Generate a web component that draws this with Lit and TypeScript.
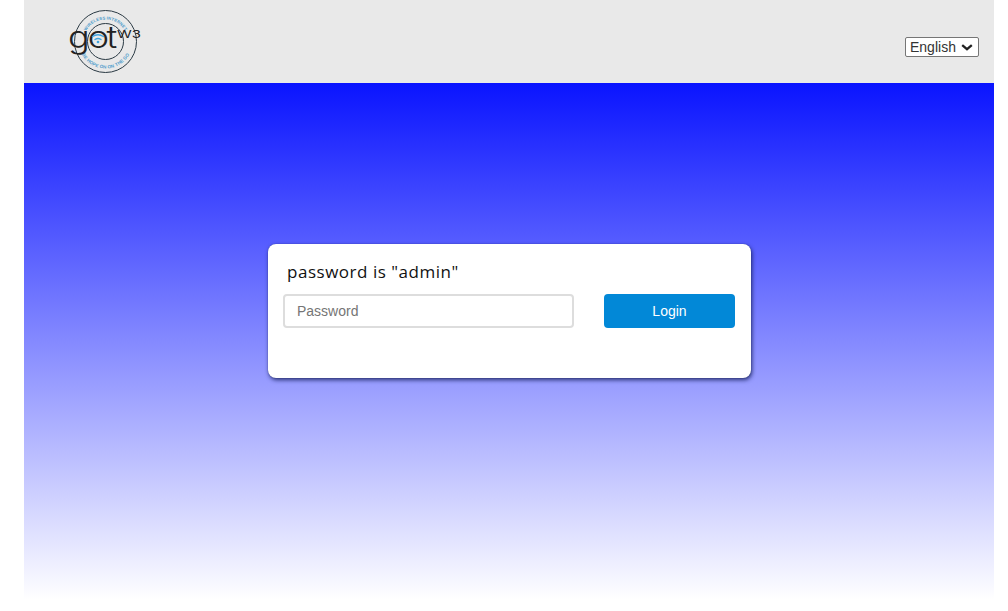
import { LitElement, html, css } from "lit";
import { customElement } from "lit/decorators.js";

@customElement("app-root")
export class AppRoot extends LitElement {
  static styles = css`
    :host {
      display: block;
      height: 611px;
      box-sizing: border-box;
      padding: 0 14px 0 24px;
      background: #fff;
      font-family: "Liberation Sans", Arial, sans-serif;
      overflow: hidden;
    }
    .header {
      height: 83px;
      background: #e9e9e9;
      display: flex;
      justify-content: space-between;
      align-items: flex-start;
      padding: 0 15px 0 40px;
    }
    .logo {
      display: block;
      margin-top: 6px;
      width: 80px;
      height: 70px;
    }
    .lang {
      appearance: none;
      -webkit-appearance: none;
      margin-top: 37px;
      width: 74px;
      height: 20px;
      box-sizing: border-box;
      font: 14px "Liberation Sans", Arial, sans-serif;
      color: #333;
      background: #fff url("data:image/svg+xml,%3Csvg xmlns='http://www.w3.org/2000/svg' width='12' height='7'%3E%3Cpath d='M1.2 1.2 6 5.2 10.8 1.2' fill='none' stroke='%23222' stroke-width='2.3'/%3E%3C/svg%3E") no-repeat 55px 6px;
      border: 1px solid #767676;
      border-radius: 2px;
      padding: 0 0 0 4px;
    }
    .main {
      height: 517px;
      box-sizing: border-box;
      padding: 161px 243px 0 244px;
      background: linear-gradient(#0a14ff 0%, #ffffff 100%);
    }
    .card {
      height: 134px;
      box-sizing: border-box;
      background: #fff;
      border-radius: 8px;
      box-shadow: 0 0 1px rgba(20, 30, 90, 0.6), 1px 2px 4px 0 rgba(20, 30, 90, 0.85);
      padding: 16px 16px 0 15px;
    }
    .title {
      margin: 0 0 10px 4px;
      height: 24px;
      font: 400 17px/24px "Open Sans", sans-serif;
      letter-spacing: 0.52px;
      color: #111;
    }
    .row {
      display: flex;
      justify-content: space-between;
    }
    .input {
      width: 291px;
      height: 34px;
      box-sizing: border-box;
      border: 2px solid #ddd;
      border-radius: 4px;
      padding: 0 12px;
      font: 14px "Liberation Sans", Arial, sans-serif;
      outline: none;
    }
    .input::placeholder {
      color: #757575;
      opacity: 1;
    }
    .btn {
      width: 131px;
      height: 34px;
      border: 0;
      border-radius: 4px;
      background: #0288d7;
      color: #fff;
      font: 14px "Liberation Sans", Arial, sans-serif;
      padding: 0;
    }
    .ring { fill: none; stroke: #2b3a44; stroke-width: 1; }
    .ring-text {
      font: 700 4.3px "Liberation Sans", Arial, sans-serif;
      fill: #4f9ccb;
      letter-spacing: 0.1px;
    }
    .ring-text.low {
      font-size: 4.6px;
    }
    .got {
      font: 300 30px Inter, "Liberation Sans", sans-serif;
      fill: #222;
    }
    .w3 {
      font: 400 11px Inter, "Liberation Sans", sans-serif;
      fill: #222;
    }
    .wifi { fill: none; stroke: #3fa3dd; stroke-width: 1.4; stroke-linecap: round; }
    .wifi-dot { fill: #3fa3dd; }
  `;

  render() {
    return html`
      <div class="header">
        <svg class="logo" viewBox="0 0 80 70" aria-label="gotw3">
          <defs>
            <path id="top-arc" d="M19.5 35.5 A22 22 0 0 1 63.5 35.5"></path>
            <path id="bot-arc" d="M14.5 35.5 A27 27 0 0 0 68.5 35.5"></path>
          </defs>
          <circle class="ring" cx="41.5" cy="35.5" r="31"></circle>
          <circle class="ring" cx="41.5" cy="35.5" r="18"></circle>
          <text class="ring-text">
            <textPath href="#top-arc" startOffset="50%" text-anchor="middle">WIRELESS INTERNET</textPath>
          </text>
          <text class="ring-text low">
            <textPath href="#bot-arc" startOffset="50%" text-anchor="middle">BE HOPE ON ON THE GO</textPath>
          </text>
          <text class="got" transform="translate(4 42) scale(1.2 1)" x="0 16.5 32" y="0">got</text>
          <text class="w3" x="53" y="32" textLength="24" lengthAdjust="spacingAndGlyphs">W3</text>
          <path class="wifi" d="M28.5 30.5 Q34 27 39.5 30.5"></path>
          <path class="wifi" d="M31 33.5 Q34 31.5 37 33.5"></path>
          <circle class="wifi-dot" cx="34" cy="36" r="1.3"></circle>
        </svg>
        <select class="lang"><option>English</option></select>
      </div>
      <div class="main">
        <div class="card">
          <p class="title">password is "admin"</p>
          <div class="row">
            <input class="input" type="password" placeholder="Password" />
            <button class="btn">Login</button>
          </div>
        </div>
      </div>
    `;
  }
}
